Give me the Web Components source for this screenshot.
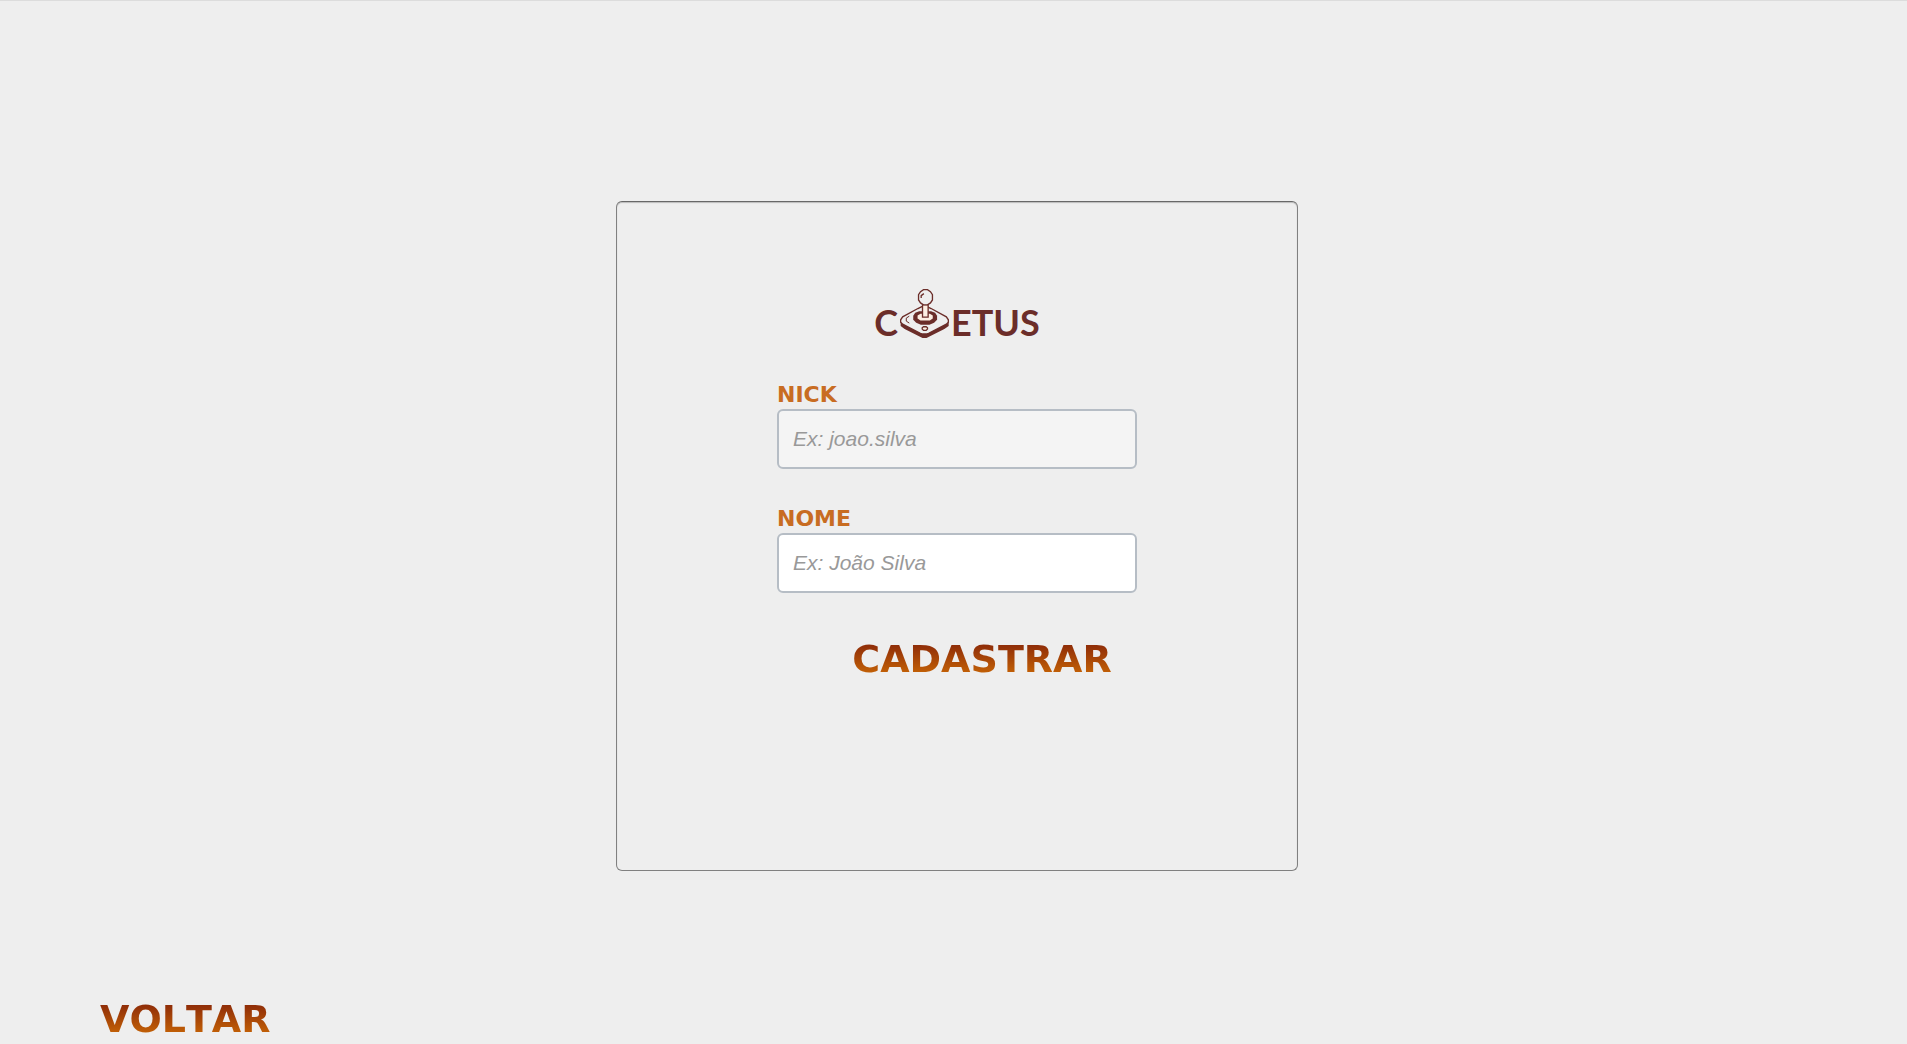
<!DOCTYPE html>
<html lang="pt-BR">
<head>
<meta charset="utf-8">
<title>Coetus - Cadastro</title>
<style>
  body { margin: 0; background: #eee; font-family: "Liberation Sans", Arial, sans-serif; }
</style>
</head>
<body>
<coetus-page>
  <coetus-card>
    <coetus-logo></coetus-logo>
    <coetus-form>
      <coetus-field label="NICK" name="nick" placeholder="Ex: joao.silva" muted></coetus-field>
      <coetus-field label="NOME" name="nome" placeholder="Ex: João Silva"></coetus-field>
      <coetus-button slot="action">CADASTRAR</coetus-button>
    </coetus-form>
  </coetus-card>
  <coetus-button slot="footer">VOLTAR</coetus-button>
</coetus-page>
<script>
  const attach = (el, html) => { el.attachShadow({ mode: 'open' }).innerHTML = html; };

  customElements.define('coetus-page', class extends HTMLElement {
    constructor() {
      super();
      attach(this, `
        <style>
          :host { display: flex; flex-direction: column; box-sizing: border-box; min-height: 100vh; border-top: 1px solid #dcdcdc; }
          main { display: flex; justify-content: center; padding: 200px 0 40px 7px; }
          footer { display: flex; margin-top: auto; padding: 0 100px 5px; }
        </style>
        <main><slot></slot></main>
        <footer><slot name="footer"></slot></footer>`);
    }
  });

  customElements.define('coetus-card', class extends HTMLElement {
    constructor() {
      super();
      attach(this, `
        <style>
          :host { display: flex; flex-direction: column; align-items: center; gap: 45px; box-sizing: border-box;
            width: 36%; min-width: 400px; max-width: 682px; min-height: 670px; padding: 87px 20px 40px;
            border: 1px solid #808080; border-top-color: #686868; border-radius: 6px; box-shadow: inset 0 1px 1px #bbb; }
        </style>
        <slot></slot>`);
    }
  });

  customElements.define('coetus-logo', class extends HTMLElement {
    constructor() {
      super();
      attach(this, `
        <style>
          :host { display: flex; align-items: flex-end; gap: 2px; color: #6b2d29;
            font: bold 36px/32px Lato, "Liberation Sans", sans-serif; }
          svg { display: block; width: 49px; height: 49px; }
        </style>
        <span>C</span>
        <svg viewBox="122 41 148 148" aria-hidden="true" stroke-linejoin="miter">
          <path d="M124 137v16l12 9 48 24 6 3h12l6-3 48-24 13-9v-18l-5 10-58 29-10 3-10-3-56-29z" fill="#6b2d29"/>
          <path d="M188 94l-12 6-46 25-6 9v7l6 6 52 27 8 3h12l8-3 52-27 6-6v-7l-6-9-46-25-12-6z" fill="#eee" stroke="#6b2d29" stroke-width="4"/>
          <path d="M150 123l-9 6v9l9 6" fill="none" stroke="#6b2d29" stroke-width="3"/>
          <path d="M180 108h36l12 5 6 9v12l-9 9-14 6h-26l-14-6-9-9v-12l6-9z" fill="#6b2d29"/>
          <path d="M184 116h28l9 5v9l-9 6h-28l-9-6v-9z" fill="#fceee2"/>
          <path d="M190 88v38h17v-38z" fill="#fceee2" stroke="#6b2d29" stroke-width="4"/>
          <path d="M193 43h12l9 6 6 9v16l-6 9-9 6h-12l-9-6-6-9v-16l6-9z" fill="#eee" stroke="#6b2d29" stroke-width="4"/>
          <path d="M186 68v-7l8-6" fill="none" stroke="#6b2d29" stroke-width="4"/>
          <path d="M193 155h8l4 3v4l-4 4h-8l-4-4v-4z" fill="#fceee2" stroke="#6b2d29" stroke-width="4"/>
        </svg>
        <span>ETUS</span>`);
    }
  });

  customElements.define('coetus-form', class extends HTMLElement {
    constructor() {
      super();
      attach(this, `
        <style>
          :host { display: block; width: 360px; max-width: 100%; }
          form { display: flex; flex-direction: column; gap: 38px; }
          .action { display: flex; justify-content: center; padding: 8px 0 0 50px; }
        </style>
        <form>
          <slot></slot>
          <div class="action"><slot name="action"></slot></div>
        </form>`);
    }
  });

  customElements.define('coetus-field', class extends HTMLElement {
    constructor() {
      super();
      attach(this, `
        <style>
          :host { display: flex; flex-direction: column; align-items: flex-start; gap: 2px; }
          label { color: #c86c22; font: bold 22px/24px "DejaVu Sans", sans-serif; }
          input { box-sizing: border-box; width: 100%; height: 60px; padding: 0 14px; border: 2px solid #b6bdc5;
            border-radius: 6px; background: #fff; color: #444; font: 21px/24px "Liberation Sans", Arial, sans-serif; }
          :host([muted]) input { background: #f4f4f4; }
          input::placeholder { color: #999; opacity: 1; font-style: italic; }
        </style>
        <label for="control"></label>
        <input id="control" type="text">`);
      this.shadowRoot.querySelector('label').textContent = this.getAttribute('label');
      const input = this.shadowRoot.querySelector('input');
      input.name = this.getAttribute('name');
      input.placeholder = this.getAttribute('placeholder');
    }
  });

  customElements.define('coetus-button', class extends HTMLElement {
    constructor() {
      super();
      attach(this, `
        <style>
          :host { display: block; }
          button { display: block; padding: 0; border: 0; cursor: pointer; color: transparent;
            background: linear-gradient(#8f2d08 15%, #c26006 85%); -webkit-background-clip: text; background-clip: text;
            font: bold 38px/40px "DejaVu Sans", sans-serif; font-kerning: none; white-space: nowrap; }
        </style>
        <button type="button"><slot></slot></button>`);
    }
  });
</script>
</body>
</html>
